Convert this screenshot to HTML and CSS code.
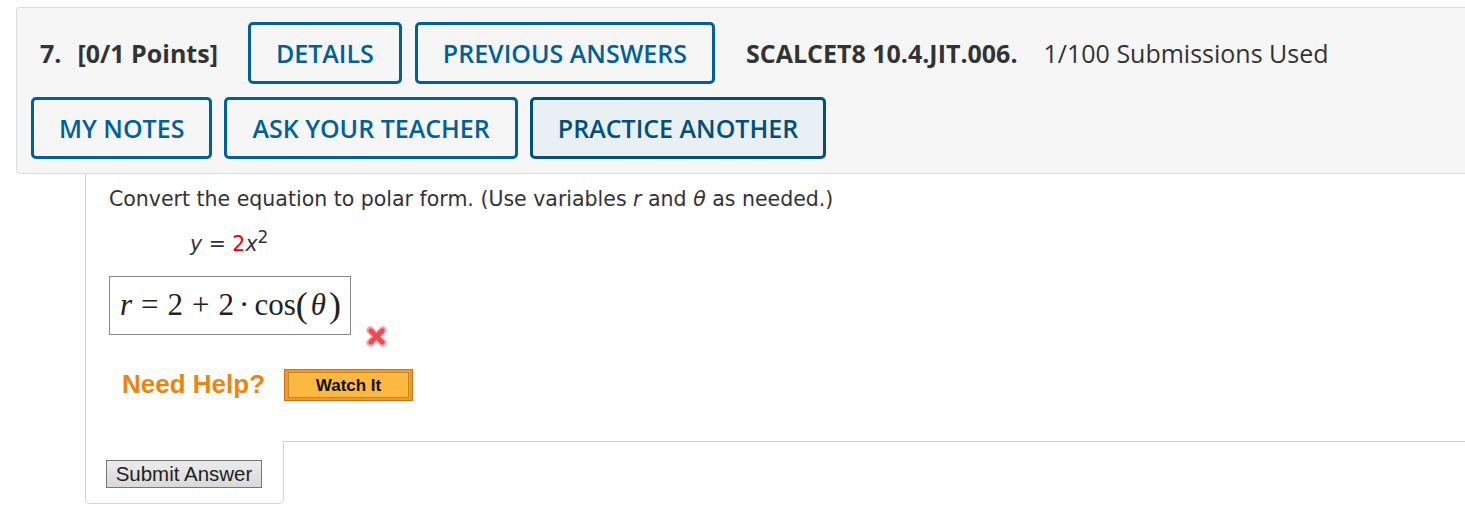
FILE: index.html
```html
<!DOCTYPE html>
<html>
<head>
<meta charset="utf-8">
<link rel="stylesheet" href="styles.css">
</head>
<body>
<div class="page">
  <div class="qhead">
    <div class="row row1">
      <span class="qnum"><span class="num">7.</span>[0/1 Points]</span>
      <button class="btn">DETAILS</button>
      <button class="btn">PREVIOUS ANSWERS</button>
      <span class="code">SCALCET8 10.4.JIT.006.</span>
      <span class="subs">1/100 Submissions Used</span>
    </div>
    <div class="row row2">
      <button class="btn">MY NOTES</button>
      <button class="btn">ASK YOUR TEACHER</button>
      <button class="btn btn-alt">PRACTICE ANOTHER</button>
    </div>
  </div>
  <div class="qbody">
    <p class="prompt">Convert the equation to polar form. (Use variables <i>r</i> and <i>θ</i> as needed.)</p>
    <p class="eq"><i>y</i> = <span class="red">2</span><i>x</i><sup>2</sup></p>
    <div class="answer-row">
      <div class="answer"><span class="mi">r</span><span class="mo">=</span>2<span class="mo">+</span>2<span class="dot">·</span>cos<span class="paren">(</span><span class="mi th">θ</span><span class="paren">)</span></div>
      <svg class="wrong" width="23" height="23" viewBox="0 0 22 22"><path d="M5 5 L17 17 M17 5 L5 17" stroke="#f7aab0" stroke-width="7.5" stroke-linecap="round"/><path d="M5.5 5.5 L16.5 16.5 M16.5 5.5 L5.5 16.5" stroke="#ee4a56" stroke-width="4.5" stroke-linecap="round"/></svg>
    </div>
    <div class="help">
      <span class="need">Need Help?</span>
      <span class="watch"><span class="watch-in">Watch It</span></span>
    </div>
  </div>
  <div class="submit-tab">
    <button class="submit">Submit Answer</button>
  </div>
</div>
</body>
</html>
```

FILE: styles.css
```css
html, body { margin: 0; padding: 0; overflow: hidden; background: #fff; }
.page { padding: 7px 0 0 16px; }
.qhead {
  background: #f6f6f6;
  border: 1px solid #dddddd;
  border-right: none;
  border-radius: 4px 0 0 4px;
  padding: 14px 0 14px 0;
  font-family: "Open Sans", sans-serif;
  color: #333;
}
.row { display: flex; align-items: center; gap: 13px; }
.row1 { padding-left: 23px; }
.row2 { padding-left: 14px; margin-top: 13px; gap: 12px; }
.qnum { font-weight: 700; font-size: 25px; margin-right: 17px; color: #333; }
.num { margin-right: 16px; }
.btn {
  font-family: "Open Sans", sans-serif;
  font-weight: 600;
  font-size: 25px;
  color: #00609a;
  background: #f6f6f6;
  border: 3px solid #00609a;
  border-radius: 5px;
  height: 62px;
  padding: 0 25px;
  cursor: pointer;
}
.btn-alt { background: #e9f0f4; border-color: #004f7c; color: #004f7c; }
.code { font-weight: 700; font-size: 25px; margin-left: 18px; color: #333; }
.subs { font-size: 25px; margin-left: 13px; color: #333; }

.qbody {
  margin-left: 69px;
  border-left: 1px solid #d3d3d3;
  border-bottom: 1px solid #d3d3d3;
  padding: 12px 0 40px 23px;
  font-family: "DejaVu Sans", Verdana, sans-serif;
  color: #333;
}
.prompt { margin: 0; font-size: 20.5px; line-height: 26px; }
.eq { margin: 12px 0 0 81px; font-size: 20.5px; line-height: 26px; }
.eq sup { font-size: 17px; }
.red { color: #e00; }
.answer-row { display: flex; align-items: flex-end; margin-top: 19px; }
.answer {
  border: 1px solid #888;
  width: 230px;
  height: 57px;
  box-sizing: content-box;
  display: flex; align-items: center;
  padding: 0 0 0 10px;
  font-family: "Liberation Serif", "DejaVu Serif", serif;
  font-size: 31px;
  color: #222;
}
.mi { font-style: italic; }
.mo { margin: 0 9px; }
.dot { margin: 0 5px; }
.paren { font-size: 36px; }
.th { margin: 0 3px; }
.wrong { margin: 0 0 -13px 14px; }
.help { display: flex; align-items: center; margin: 34px 0 0 13px; }
.need { font-family: "Liberation Sans", Arial, sans-serif; font-weight: 700; font-size: 26px; color: #ea8510; margin-right: 19px; }
.watch {
  display: inline-block;
  border: 1px solid #c9741a;
  background: #f49a23;
  padding: 2px 3px;
}
.watch-in {
  display: block;
  width: 119px;
  height: 24px;
  line-height: 25px;
  text-align: center;
  background: #fcb940;
  border: 1px solid #c58630;
  font-family: "Liberation Sans", Arial, sans-serif;
  font-weight: 700;
  font-size: 17px;
  color: #111;
}
.submit-tab {
  margin: -1px 0 0 69px;
  width: 199px;
  box-sizing: border-box;
  height: 63px;
  background: #fff;
  border: 1px solid #d3d3d3;
  border-top: none;
  border-radius: 0 0 5px 5px;
  padding: 19px 0 0 20px;
}
.submit {
  font-family: "Liberation Sans", Arial, sans-serif;
  font-size: 20.5px;
  color: #222;
  background: linear-gradient(#ececec, #d9d9d9);
  border: 1px solid #777;
  padding: 1px 8px;
  height: 28px;
  width: 156px;
}
```
